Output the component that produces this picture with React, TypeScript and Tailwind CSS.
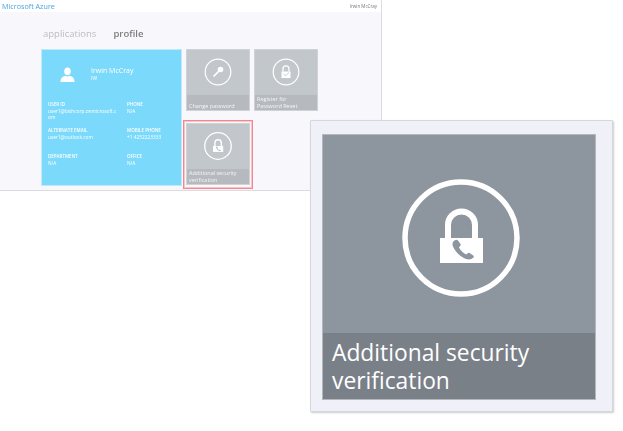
import React from "react";

function PersonIcon() {
  return (
    <svg viewBox="0 0 16 16" className="w-[15px] h-[15px]" fill="#fff">
      <ellipse cx="8" cy="4.6" rx="3.5" ry="4.1" />
      <path d="M0.5 16 C0.5 11.8 3 10 5.6 9.4 C6.8 10.4 9.2 10.4 10.4 9.4 C13 10 15.5 11.8 15.5 16 Z" />
    </svg>
  );
}

function KeyIcon() {
  return (
    <svg viewBox="0 0 28 28" className="w-[28px] h-[28px]" fill="none">
      <circle cx="14" cy="14" r="12.8" stroke="#fff" strokeWidth="1.2" />
      <circle cx="16.5" cy="11.5" r="2.8" fill="#fff" />
      <path d="M15 13 L10 18" stroke="#fff" strokeWidth="1.7" strokeLinecap="round" />
    </svg>
  );
}

function LockCheckIcon() {
  return (
    <svg viewBox="0 0 28 28" className="w-[28px] h-[28px]" fill="none">
      <circle cx="14" cy="14" r="12.8" stroke="#fff" strokeWidth="1.2" />
      <path d="M11 13.5 V10.8 a3 3 0 0 1 6 0 V13.5" stroke="#fff" strokeWidth="1.3" />
      <rect x="9.5" y="13.5" width="9" height="6.5" fill="#fff" />
      <path d="M11.5 15.8 L13.5 17.8 L17 14.5" stroke="#c2c7cc" strokeWidth="0.9" />
    </svg>
  );
}

function LockPhoneIcon({ size, bg }: { size: string; bg: string }) {
  return (
    <svg viewBox="0 0 118 118" className={size} fill="none">
      <circle cx="59" cy="59" r="56" stroke="#fff" strokeWidth="5.5" />
      <path d="M46 60 V46 a13.5 13.5 0 0 1 27 0 V60" stroke="#fff" strokeWidth="6" />
      <path d="M38 59 H81 V84 H38 Z" fill="#fff" />
      <path
        d="M52.5 61.5 C50.5 62.8 50 65 51 67.5 C53.5 73 58 77.5 64 80 C67 81 69.5 80.5 71.5 78.5 C72 77.8 72 77.2 71.2 76.6 L67.6 74 C66.9 73.5 66.3 73.6 65.7 74.2 L64.4 75.6 C61 74 58.5 71.4 56.9 68.2 L58.2 66.9 C58.8 66.3 58.9 65.7 58.5 65 L56 61.5 C55 60.6 53.8 60.7 52.5 61.5 Z"
        fill={bg}
      />
    </svg>
  );
}

function Field({ label, children }: { label: string; children: React.ReactNode }) {
  return (
    <div className="text-white leading-[6.5px] w-[69px]">
      <div className="text-[4.5px] font-semibold h-[6.5px]">{label}</div>
      <div className="text-[4.8px] break-all">{children}</div>
    </div>
  );
}

function Tile({ icon, caption }: { icon: React.ReactNode; caption: React.ReactNode }) {
  return (
    <div className="w-[64px] h-[62px] bg-[#c2c7cc] border border-[#cfd3d7] flex flex-col">
      <div className="flex-1 flex items-center justify-center pb-[1px]">{icon}</div>
      <div className="h-[15px] bg-[#b6babe] text-[#f4f5f6] text-[5.5px] leading-[6.5px] px-[2px] flex flex-col justify-end pb-[1px]">
        {caption}
      </div>
    </div>
  );
}

export default function App() {
  return (
    <div className="relative w-[623px] h-[431px] bg-white overflow-hidden font-['Open_Sans',sans-serif]">
      {/* portal screenshot */}
      <div className="w-[382px] h-[191px] border-r border-b border-[#dcdce0] bg-[#f8f8fc] blur-[0.4px]">
        <div className="h-[12px] bg-white flex items-center justify-between pl-[2px] pr-[4px]">
          <span className="text-[#4aa6e0] text-[7.2px]">Microsoft Azure</span>
          <span className="text-[#777] text-[4.5px]">Irwin McCray</span>
        </div>

        <div className="pl-[41px]">
          <div className="flex items-baseline gap-[17px] pl-[2px] h-[37px] pt-[15px]">
            <span className="text-[#bdbdbd] text-[9.5px] leading-[14px]">applications</span>
            <span className="text-[#7c7c7c] text-[9.5px] leading-[14px] font-semibold">profile</span>
          </div>

          <div className="flex gap-[4px]">
            <div className="w-[141px] h-[137px] bg-[#7bd9fb] border border-[#bfe9f9] pl-[6px]">
              <div className="flex items-start h-[51px] pt-[17px]">
                <div className="ml-[12px]">
                  <PersonIcon />
                </div>
                <div className="ml-[16px] -mt-[1px] text-white">
                  <div className="text-[7px] leading-[9px]">Irwin McCray</div>
                  <div className="text-[5px] leading-[7px]">IW</div>
                </div>
              </div>
              <div className="grid grid-cols-[79px_1fr] gap-y-[7px] auto-rows-[19px]">
                <Field label="USER ID">user1@bishcorp.onmicrosoft.com</Field>
                <Field label="PHONE">N/A</Field>
                <Field label="ALTERNATE EMAIL">user1@outlook.com</Field>
                <Field label="MOBILE PHONE">+1 4252223333</Field>
                <Field label="DEPARTMENT">N/A</Field>
                <Field label="OFFICE">N/A</Field>
              </div>
            </div>

            <div className="flex flex-col gap-[12px]">
              <div className="flex gap-[4px]">
                <Tile icon={<KeyIcon />} caption="Change password" />
                <Tile
                  icon={<LockCheckIcon />}
                  caption={
                    <>
                      <span>Register for</span>
                      <span>Password Reset</span>
                    </>
                  }
                />
              </div>
              <div className="relative w-[64px]">
                <Tile
                  icon={<LockPhoneIcon size="w-[28px] h-[28px]" bg="#c2c7cc" />}
                  caption={
                    <>
                      <span>Additional security</span>
                      <span>verification</span>
                    </>
                  }
                />
                <div className="absolute -left-[3px] -top-[3px] w-[70px] h-[69px] border border-[#f2888f] shadow-[inset_0_0_0_1px_#f9c5c8]" />
              </div>
            </div>
          </div>
        </div>
      </div>

      {/* zoomed callout */}
      <div className="absolute left-[310px] top-[120px] w-[303px] h-[292px] bg-[#f0f1f8] border border-[#d6d7dc] rounded-[1px] shadow-[1px_1px_2px_rgba(0,0,0,0.2)] pl-[11px] pt-[13px]">
        <div className="w-[274px] h-[266px] bg-[#8d969f] border border-[#b4b8bd] flex flex-col">
          <div className="flex-1 flex items-center justify-center pt-[8px] pl-[3px]">
            <LockPhoneIcon size="w-[118px] h-[118px]" bg="#8d969f" />
          </div>
          <div className="h-[66px] bg-[#7a8088] text-white text-[22.8px] leading-[28px] px-[9px] pt-[6px]">
            <div>Additional security</div>
            <div>verification</div>
          </div>
        </div>
      </div>
    </div>
  );
}
